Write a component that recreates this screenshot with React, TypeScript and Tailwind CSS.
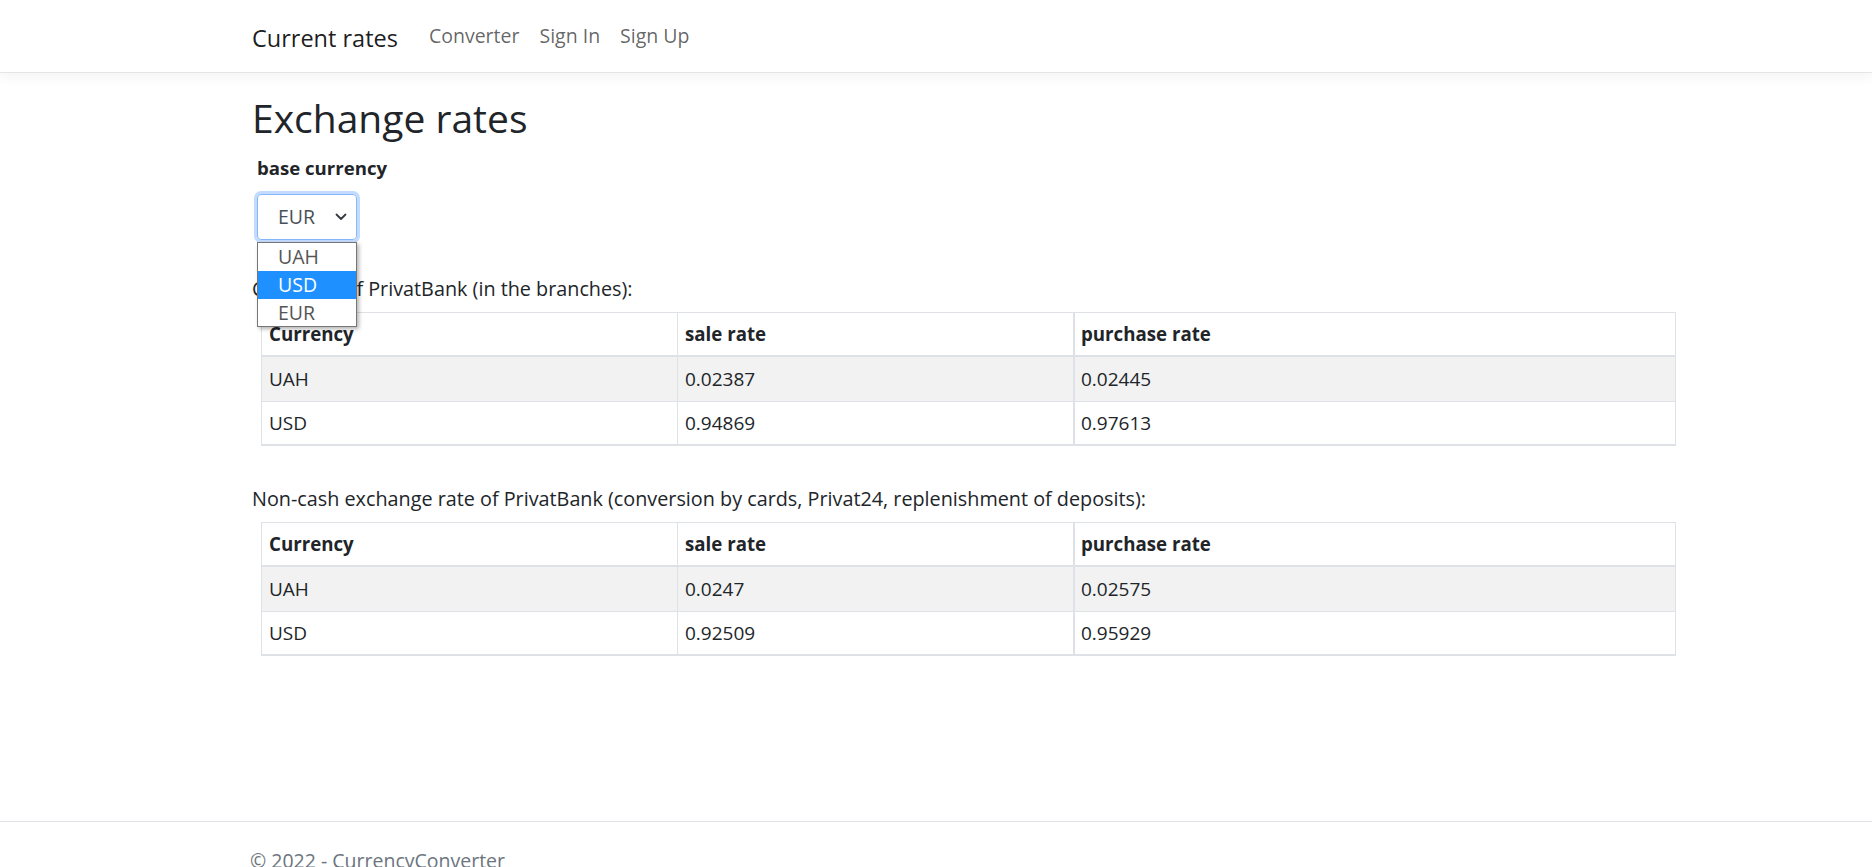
const cash = [
  { currency: 'UAH', sale: '0.02387', purchase: '0.02445' },
  { currency: 'USD', sale: '0.94869', purchase: '0.97613' },
]

const nonCash = [
  { currency: 'UAH', sale: '0.0247', purchase: '0.02575' },
  { currency: 'USD', sale: '0.92509', purchase: '0.95929' },
]

type Rate = { currency: string; sale: string; purchase: string }

function RatesTable({ rows }: { rows: Rate[] }) {
  return (
    <div className="ml-[9px] w-[1415px] border border-b-2 border-[#dee2e6] text-[19px] text-[#212529]">
      <div className="grid grid-cols-[415px_396px_602px] h-[44px] border-b-2 border-[#dee2e6] font-bold text-[18.7px]">
        <div className="px-[7px] flex items-center">Currency</div>
        <div className="px-[7px] flex items-center border-l border-[#dee2e6]">sale rate</div>
        <div className="px-[6px] flex items-center border-l-2 border-[#dee2e6]">purchase rate</div>
      </div>
      {rows.map((r, i) => (
        <div
          key={r.currency}
          className={
            i % 2 === 0
              ? 'grid grid-cols-[415px_396px_602px] h-[45px] border-b border-[#dee2e6] bg-[#f2f2f2]'
              : 'grid grid-cols-[415px_396px_602px] h-[42px]'
          }
        >
          <div className="px-[7px] flex items-center">{r.currency}</div>
          <div className="px-[7px] flex items-center border-l border-[#dee2e6]">{r.sale}</div>
          <div className="px-[6px] flex items-center border-l-2 border-[#dee2e6]">{r.purchase}</div>
        </div>
      ))}
    </div>
  )
}

export default function App() {
  return (
    <div className="min-h-screen bg-white font-['Open_Sans',sans-serif] text-[19.5px] leading-[30px] text-[#212529] overflow-hidden">
      {/* Navbar */}
      <header className="h-[73px] border-b border-[#e5e5e5] shadow-[0_4px_12px_rgba(0,0,0,0.05)] flex items-start pl-[252px]">
        <span className="mt-[20px] text-[23.5px] leading-[36px] text-[rgba(0,0,0,0.9)] mr-[31px]">Current rates</span>
        <nav className="mt-[21px] flex gap-[20px] text-[rgba(0,0,0,0.62)]">
          <span>Converter</span>
          <span>Sign In</span>
          <span>Sign Up</span>
        </nav>
      </header>

      {/* Main */}
      <main className="pl-[252px] pt-[21px] h-[748px]">
        <h1 className="text-[39px] leading-[48px] font-medium">Exchange rates</h1>

        <div className="ml-[5px] mt-[12px] text-[18.6px] leading-[28px] font-bold">base currency</div>

        <div className="relative ml-[5px] mt-[12px] w-[100px]">
          <div className="h-[46px] rounded-[4px] border border-[#86b7fe] shadow-[0_0_0_3px_rgba(13,110,253,0.25)] flex items-center pl-[20px] pr-[8px] text-[#495057]">
            <span className="flex-1">EUR</span>
            <svg width="12" height="8" viewBox="0 0 12 8" className="mr-[1px]">
              <path d="M1.5 1.5 L6 6 L10.5 1.5" fill="none" stroke="#343a40" strokeWidth="1.8" strokeLinecap="round" strokeLinejoin="round" />
            </svg>
          </div>
          {/* open native dropdown */}
          <div className="absolute left-0 top-[48px] w-[100px] z-10 bg-white border border-[#767676] shadow-[2px_2px_4px_rgba(0,0,0,0.3)] text-[#555]">
            <div className="h-[28px] pl-[20px] flex items-center">UAH</div>
            <div className="h-[28px] pl-[20px] flex items-center bg-[#1e90ff] text-white">USD</div>
            <div className="h-[27px] pl-[20px] flex items-center">EUR</div>
          </div>
        </div>

        <p className="mt-[34px] mb-[8px] text-[19.8px] font-medium">Cash rate of PrivatBank (in the branches):</p>
        <RatesTable rows={cash} />

        <p className="mt-[38px] mb-[8px] text-[19.8px] font-medium">
          Non-cash exchange rate of PrivatBank (conversion by cards, Privat24, replenishment of deposits):
        </p>
        <RatesTable rows={nonCash} />
      </main>

      {/* Footer */}
      <footer className="border-t border-[#dee2e6] pl-[250px] pt-[24px] text-[#6c757d]">
        © 2022 - CurrencyConverter
      </footer>
    </div>
  )
}
